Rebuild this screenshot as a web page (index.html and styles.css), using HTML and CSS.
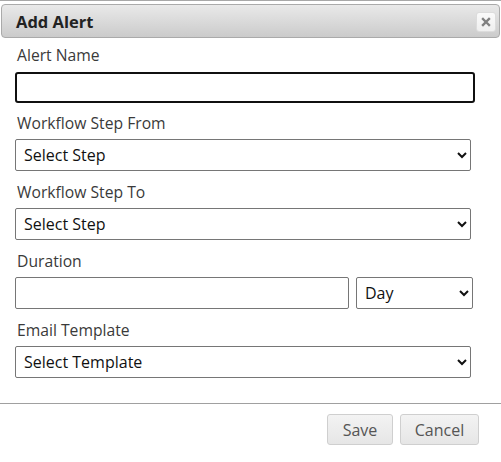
FILE: index.html
```html
<!DOCTYPE html>
<html>
<head>
<meta charset="utf-8">
<link rel="stylesheet" href="styles.css">
</head>
<body>
<div class="dialog">
  <div class="titlebar">
    <span class="title">Add Alert</span>
    <button class="close" type="button" aria-label="close">
      <svg width="10" height="10" viewBox="0 0 10 10"><path d="M2 2 L8 8 M8 2 L2 8" stroke="#808080" stroke-width="2.4" stroke-linecap="square"/></svg>
    </button>
  </div>
  <div class="content">
    <div class="group first">
      <label class="label">Alert Name</label>
      <input class="field wide focused" type="text">
    </div>
    <div class="group">
      <label class="label">Workflow Step From</label>
      <select class="field sel"><option>Select Step</option></select>
    </div>
    <div class="group">
      <label class="label">Workflow Step To</label>
      <select class="field sel"><option>Select Step</option></select>
    </div>
    <div class="group">
      <label class="label">Duration</label>
      <div class="row">
        <input class="field duration" type="text">
        <select class="field unit"><option>Day</option></select>
      </div>
    </div>
    <div class="group">
      <label class="label">Email Template</label>
      <select class="field sel"><option>Select Template</option></select>
    </div>
  </div>
  <div class="buttonpane">
    <button class="btn save" type="button">Save</button>
    <button class="btn cancel" type="button">Cancel</button>
  </div>
</div>
</body>
</html>
```
FILE: styles.css
```css
html, body {
  margin: 0;
  padding: 0;
  background: #fff;
}
body {
  font-family: "Open Sans", "DejaVu Sans", sans-serif;
  color: #333;
}
.dialog {
  width: 501px;
  height: 462px;
  border-top: 1px solid #a8a8a8;
  box-sizing: border-box;
  padding-top: 3px;
}
.titlebar {
  margin: 0 1px 0 1px;
  height: 34px;
  box-sizing: border-box;
  border: 1px solid #aaa;
  border-radius: 4px;
  background: linear-gradient(#e9e9e9, #cbcbcb);
  display: flex;
  align-items: center;
  justify-content: space-between;
  padding: 0 3px 0 14px;
}
.title {
  font-weight: bold;
  font-size: 16.5px;
  color: #222;
}
.close {
  width: 20px;
  height: 20px;
  margin-top: 2px;
  padding: 0;
  border: 1px solid #dcdcdc;
  border-radius: 3px;
  background: linear-gradient(#fafafa, #efefef);
  display: flex;
  align-items: center;
  justify-content: center;
}
.content {
  padding: 6px 0 0 15px;
  height: 366px;
  box-sizing: border-box;
  border-bottom: 1px solid #a0a0a0;
}
.group {
  display: flex;
  flex-direction: column;
  align-items: flex-start;
  margin-bottom: 9px;
}
.group.first {
  margin-bottom: 8px;
}
.label {
  font-size: 15.7px;
  line-height: 20px;
  margin: 2px 0 6px 2px;
  color: #3a3a3a;
}
.group.first .label {
  margin: 1px 0 7px 2px;
}
.field {
  font-family: "Open Sans", "DejaVu Sans", sans-serif;
  font-size: 16px;
  color: #111;
  box-sizing: border-box;
  border: 1px solid #767676;
  border-radius: 2px;
  background: #fff;
  margin: 0;
}
.wide {
  width: 460px;
  height: 31px;
}
.focused {
  border: 2px solid #101010;
  border-radius: 3px;
}
.sel {
  width: 456px;
  height: 32px;
  padding: 0 4px;
}
.row {
  display: flex;
  gap: 7px;
}
.duration {
  width: 334px;
  height: 32px;
}
.unit {
  width: 117px;
  height: 32px;
  padding: 0 4px;
}
.buttonpane {
  display: flex;
  justify-content: flex-end;
  gap: 7px;
  padding: 10px 22px 0 0;
}
.btn {
  font-family: "Open Sans", "DejaVu Sans", sans-serif;
  font-size: 16px;
  color: #555;
  height: 31px;
  border: 1px solid #cfcfcf;
  border-radius: 3px;
  background: linear-gradient(#f3f3f3, #e6e6e6);
  padding: 0;
}
.save { width: 66px; }
.cancel { width: 79px; }
```
